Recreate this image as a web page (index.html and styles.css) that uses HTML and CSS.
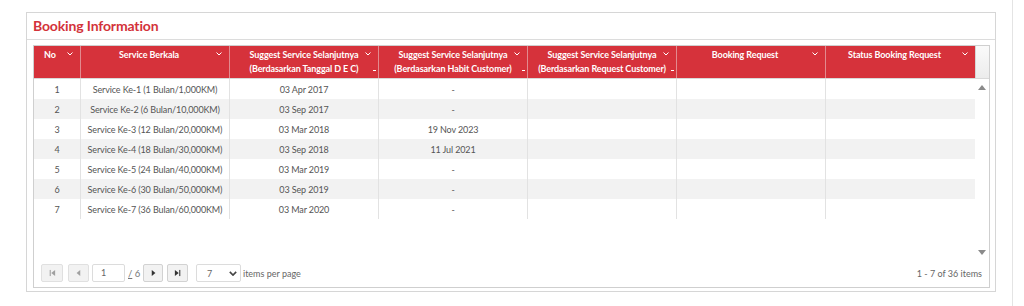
FILE: index.html
```html
<!DOCTYPE html>
<html>
<head>
<meta charset="utf-8">
<link rel="stylesheet" href="styles.css">
</head>
<body>
<div class="main">
  <div class="card">
    <div class="card-head"><h2 class="title">Booking Information</h2></div>
    <div class="card-body">
      <div class="grid">
        <div class="grid-head">
          <div class="hrow">
            <div class="th c-no single-no"><span class="tt">No</span><svg class="chev" viewBox="0 0 6 4"><path d="M0.5 0.5 L3 3 L5.5 0.5"/></svg></div>
            <div class="th c-w single"><span class="tt">Service Berkala</span><svg class="chev" viewBox="0 0 6 4"><path d="M0.5 0.5 L3 3 L5.5 0.5"/></svg></div>
            <div class="th c-w"><span class="tt">Suggest Service Selanjutnya<br>(Berdasarkan Tanggal D E C)</span><svg class="chev" viewBox="0 0 6 4"><path d="M0.5 0.5 L3 3 L5.5 0.5"/></svg><span class="mark"></span></div>
            <div class="th c-w"><span class="tt">Suggest Service Selanjutnya<br>(Berdasarkan Habit Customer)</span><svg class="chev" viewBox="0 0 6 4"><path d="M0.5 0.5 L3 3 L5.5 0.5"/></svg><span class="mark"></span></div>
            <div class="th c-w"><span class="tt">Suggest Service Selanjutnya<br>(Berdasarkan Request Customer)</span><svg class="chev" viewBox="0 0 6 4"><path d="M0.5 0.5 L3 3 L5.5 0.5"/></svg><span class="mark"></span></div>
            <div class="th c-w single"><span class="tt">Booking Request</span><svg class="chev" viewBox="0 0 6 4"><path d="M0.5 0.5 L3 3 L5.5 0.5"/></svg></div>
            <div class="th c-last single"><span class="tt">Status Booking Request</span><svg class="chev" viewBox="0 0 6 4"><path d="M0.5 0.5 L3 3 L5.5 0.5"/></svg></div>
          </div>
          <div class="hscroll"></div>
        </div>
        <div class="grid-content">
          <div class="rows">
            <div class="row"><div class="td c-no">1</div><div class="td c-w">Service Ke-1 (1 Bulan/1,000KM)</div><div class="td c-w">03 Apr 2017</div><div class="td c-w">-</div><div class="td c-w"></div><div class="td c-w"></div><div class="td c-last"></div></div>
            <div class="row alt"><div class="td c-no">2</div><div class="td c-w">Service Ke-2 (6 Bulan/10,000KM)</div><div class="td c-w">03 Sep 2017</div><div class="td c-w">-</div><div class="td c-w"></div><div class="td c-w"></div><div class="td c-last"></div></div>
            <div class="row"><div class="td c-no">3</div><div class="td c-w">Service Ke-3 (12 Bulan/20,000KM)</div><div class="td c-w">03 Mar 2018</div><div class="td c-w">19 Nov 2023</div><div class="td c-w"></div><div class="td c-w"></div><div class="td c-last"></div></div>
            <div class="row alt"><div class="td c-no">4</div><div class="td c-w">Service Ke-4 (18 Bulan/30,000KM)</div><div class="td c-w">03 Sep 2018</div><div class="td c-w">11 Jul 2021</div><div class="td c-w"></div><div class="td c-w"></div><div class="td c-last"></div></div>
            <div class="row"><div class="td c-no">5</div><div class="td c-w">Service Ke-5 (24 Bulan/40,000KM)</div><div class="td c-w">03 Mar 2019</div><div class="td c-w">-</div><div class="td c-w"></div><div class="td c-w"></div><div class="td c-last"></div></div>
            <div class="row alt"><div class="td c-no">6</div><div class="td c-w">Service Ke-6 (30 Bulan/50,000KM)</div><div class="td c-w">03 Sep 2019</div><div class="td c-w">-</div><div class="td c-w"></div><div class="td c-w"></div><div class="td c-last"></div></div>
            <div class="row"><div class="td c-no">7</div><div class="td c-w">Service Ke-7 (36 Bulan/60,000KM)</div><div class="td c-w">03 Mar 2020</div><div class="td c-w">-</div><div class="td c-w"></div><div class="td c-w"></div><div class="td c-last"></div></div>
          </div>
          <div class="vscroll">
            <svg class="arr" viewBox="0 0 8 5"><path d="M0 5 L4 0 L8 5 Z"/></svg>
            <svg class="arr" viewBox="0 0 8 5"><path d="M0 0 L4 5 L8 0 Z"/></svg>
          </div>
        </div>
        <div class="pager">
          <div class="pager-left">
            <span class="pbtn b-first"><svg viewBox="0 0 8 8"><rect x="0.8" y="0.5" width="1.2" height="7"/><path d="M7 0.5 L2.6 4 L7 7.5 Z"/></svg></span>
            <span class="pbtn b-prev"><svg viewBox="0 0 8 8"><path d="M6 0.5 L1.8 4 L6 7.5 Z"/></svg></span>
            <span class="pinput">1</span>
            <span class="pof"><u>/</u> 6</span>
            <span class="pbtn dark b-next"><svg viewBox="0 0 8 8"><path d="M2 0.5 L6.2 4 L2 7.5 Z"/></svg></span>
            <span class="pbtn dark b-last"><svg viewBox="0 0 8 8"><path d="M1 0.5 L5.4 4 L1 7.5 Z"/><rect x="6" y="0.5" width="1.2" height="7"/></svg></span>
            <span class="psel">7<svg viewBox="0 0 10 6"><path d="M1 1 L5 5 L9 1"/></svg></span>
            <span class="plabel">items per page</span>
          </div>
          <div class="pinfo">1 - 7 of 36 items</div>
        </div>
      </div>
    </div>
  </div>
</div>
<div class="rail"></div>
</body>
</html>
```

FILE: styles.css
```css
html, body {
  margin: 0;
  padding: 0;
  background: #fff;
  height: 100%;
}
body {
  display: flex;
  font-family: Lato, "Open Sans", sans-serif;
  color: #555;
}
.main {
  width: 1012px;
  padding: 12px 0 0 26px;
  box-sizing: border-box;
}
.rail {
  flex: 1;
  border-left: 1px solid #e4e4e4;
}
.card {
  width: 970px;
  height: 280px;
  box-sizing: border-box;
  border: 1px solid #d6d6d6;
  display: flex;
  flex-direction: column;
}
.card-head {
  height: 26px;
  border-bottom: 1px solid #dcdcdc;
  padding: 0 6px;
  display: flex;
  align-items: center;
}
.title {
  margin: 0;
  font-size: 14px;
  font-weight: 700;
  color: #d3323a;
  line-height: 16px;
  letter-spacing: -0.15px;
}
.card-body {
  flex: 1;
  padding: 5px 5px 3px 6px;
  display: flex;
}
.grid {
  flex: 1;
  border: 1px solid #cfcfcf;
  display: flex;
  flex-direction: column;
}
.grid-head {
  display: flex;
  height: 32px;
  border-bottom: 1px solid #d9d9d9;
}
.hrow {
  display: flex;
  background: #d6323b;
}
.hscroll {
  flex: 1;
  background: linear-gradient(#fafafa, #ececec);
  border-left: 1px solid #d6d6d6;
}
.c-no { width: 46px; }
.c-w { width: 149px; }
.c-last { width: 150px; }
.th {
  position: relative;
  box-sizing: border-box;
  color: #fff;
  font-size: 9px;
  font-weight: 700;
  line-height: 14px;
  letter-spacing: -0.1px;
  text-align: center;
  padding: 2px 2px 0 2px;
  border-left: 1px solid #e28a8f;
  white-space: nowrap;
}
.th.single { padding-right: 14px; }
.th.single-no { padding-right: 16px; }
.th:first-child { border-left: 0; }
.tt { display: block; }
.chev {
  position: absolute;
  right: 7px;
  top: 6px;
  width: 6px;
  height: 4px;
  fill: none;
  stroke: #fff;
  stroke-width: 1;
}
.mark {
  position: absolute;
  right: 2px;
  top: 24px;
  width: 3px;
  height: 1px;
  background: #fff;
}
.grid-content {
  flex: 1;
  display: flex;
  min-height: 0;
}
.rows {
  display: flex;
  flex-direction: column;
}
.row {
  display: flex;
  height: 20px;
}
.row.alt { background: #f2f2f2; }
.td {
  box-sizing: border-box;
  font-size: 9px;
  letter-spacing: -0.12px;
  line-height: 21px;
  text-align: center;
  color: #555;
  border-left: 1px solid #e2e2e2;
  white-space: nowrap;
}
.td:first-child { border-left: 0; }
.vscroll {
  flex: 1;
  display: flex;
  flex-direction: column;
  justify-content: space-between;
  align-items: center;
  padding: 6px 0 4px;
  background: #fff;
}
.arr {
  width: 8px;
  height: 5px;
  fill: #8a8a8a;
}
.pager {
  height: 28px;
  display: flex;
  align-items: center;
  justify-content: space-between;
  padding: 0 7px 0 7px;
  font-size: 9px;
  color: #555;
}
.pager-left {
  display: flex;
  align-items: center;
}
.pbtn {
  box-sizing: border-box;
  height: 18px;
  border: 1px solid #e0e0e0;
  border-radius: 2px;
  background: #f2f2f2;
  display: flex;
  align-items: center;
  justify-content: center;
}
.b-first { width: 22px; margin-right: 5px; }
.b-prev { width: 21px; margin-right: 3px; }
.b-next { width: 20px; margin-right: 4px; }
.b-last { width: 21px; margin-right: 8px; }
.pbtn svg {
  width: 7px;
  height: 8px;
  fill: #a0a0a0;
}
.pbtn.dark svg { fill: #333; }
.pbtn.dark { border-color: #d2d2d2; }
.pinput {
  box-sizing: border-box;
  width: 33px;
  height: 18px;
  border: 1px solid #dcdcdc;
  border-radius: 2px;
  background: #fff;
  padding-left: 8px;
  line-height: 16px;
  color: #666;
  margin-right: 3px;
}
.pof {
  width: 12px;
  margin-right: 3px;
  color: #777;
  font-size: 9.5px;
  white-space: nowrap;
}
.psel {
  box-sizing: border-box;
  width: 45px;
  height: 18px;
  border: 1px solid #dcdcdc;
  border-radius: 2px;
  background: #fff;
  display: flex;
  align-items: center;
  justify-content: space-between;
  padding: 0 3px 0 10px;
  color: #666;
}
.psel svg {
  width: 8px;
  height: 5px;
  fill: none;
  stroke: #444;
  stroke-width: 2;
}
.plabel {
  margin-left: 2px;
  color: #666;
}
.pinfo {
  color: #666;
  font-size: 9px;
}
```
